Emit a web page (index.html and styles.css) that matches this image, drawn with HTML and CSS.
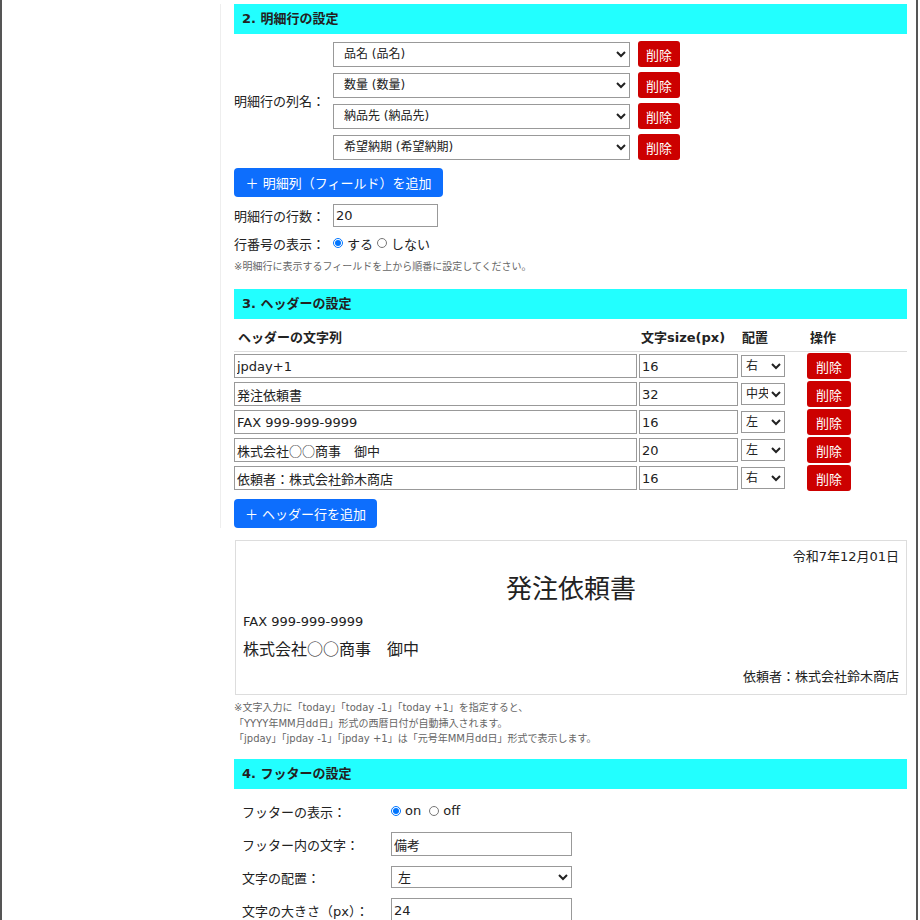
FILE: index.html
```html
<!DOCTYPE html>
<html lang="ja">
<head>
    <meta charset="UTF-8">
    <meta name="viewport" content="width=device-width, initial-scale=1.0">
    <title>帳票設定</title>
    <link rel="stylesheet" href="styles.css">
</head>
<body>
    <div class="frame">
        <div class="side"></div>

        <div class="main">
            <div class="panel">
                <!-- 2. 明細行 -->
                <h2 class="sec-title">2. 明細行の設定</h2>
                <div class="cols-block">
                    <div class="cols-label">明細行の列名：</div>
                    <div class="cols-list">
                        <div class="col-row">
                            <select class="col-select"><option>品名 (品名)</option></select>
                            <button class="btn-del">削除</button>
                        </div>
                        <div class="col-row">
                            <select class="col-select"><option>数量 (数量)</option></select>
                            <button class="btn-del">削除</button>
                        </div>
                        <div class="col-row">
                            <select class="col-select"><option>納品先 (納品先)</option></select>
                            <button class="btn-del">削除</button>
                        </div>
                        <div class="col-row">
                            <select class="col-select"><option>希望納期 (希望納期)</option></select>
                            <button class="btn-del">削除</button>
                        </div>
                    </div>
                </div>
                <button class="btn-add btn-add-col">＋ 明細列（フィールド）を追加</button>

                <div class="form-row row-count">
                    <label class="row-label" for="rowCount">明細行の行数：</label>
                    <input id="rowCount" class="num-input" type="text" value="20">
                </div>
                <div class="form-row row-numbers">
                    <span class="row-label">行番号の表示：</span>
                    <label class="radio"><input type="radio" name="lineNo" checked> する</label>
                    <label class="radio"><input type="radio" name="lineNo"> しない</label>
                </div>
                <p class="note">※明細行に表示するフィールドを上から順番に設定してください。</p>

                <!-- 3. ヘッダー -->
                <h2 class="sec-title">3. ヘッダーの設定</h2>
                <div class="hd-head">
                    <span class="hd-c1">ヘッダーの文字列</span>
                    <span class="hd-c2">文字size(px)</span>
                    <span class="hd-c3">配置</span>
                    <span class="hd-c4">操作</span>
                </div>
                <div class="hd-rows">
                    <div class="hd-row">
                        <input class="hd-text" type="text" value="jpday+1">
                        <input class="hd-size" type="text" value="16">
                        <select class="hd-align"><option>右</option></select>
                        <button class="btn-del">削除</button>
                    </div>
                    <div class="hd-row">
                        <input class="hd-text" type="text" value="発注依頼書">
                        <input class="hd-size" type="text" value="32">
                        <select class="hd-align"><option>中央</option></select>
                        <button class="btn-del">削除</button>
                    </div>
                    <div class="hd-row">
                        <input class="hd-text" type="text" value="FAX 999-999-9999">
                        <input class="hd-size" type="text" value="16">
                        <select class="hd-align"><option>左</option></select>
                        <button class="btn-del">削除</button>
                    </div>
                    <div class="hd-row">
                        <input class="hd-text hd-cjk" type="text" value="株式会社○○商事　御中">
                        <input class="hd-size" type="text" value="20">
                        <select class="hd-align"><option>左</option></select>
                        <button class="btn-del">削除</button>
                    </div>
                    <div class="hd-row">
                        <input class="hd-text" type="text" value="依頼者：株式会社鈴木商店">
                        <input class="hd-size" type="text" value="16">
                        <select class="hd-align"><option>右</option></select>
                        <button class="btn-del">削除</button>
                    </div>
                </div>
                <button class="btn-add btn-add-head">＋ ヘッダー行を追加</button>
            </div>

            <!-- プレビュー -->
            <div class="preview">
                <div class="pv-line pv-right pv-date">令和7年12月01日</div>
                <div class="pv-line pv-center pv-title">発注依頼書</div>
                <div class="pv-line pv-fax">FAX 999-999-9999</div>
                <div class="pv-line pv-to">株式会社<span class="cjk">○○</span>商事　御中</div>
                <div class="pv-line pv-right pv-from">依頼者：株式会社鈴木商店</div>
            </div>
            <p class="note note-date">
                ※文字入力に「today」「today -1」「today +1」を指定すると、<br>
                「YYYY年MM月dd日」形式の西暦日付が自動挿入されます。<br>
                「jpday」「jpday -1」「jpday +1」は「元号年MM月dd日」形式で表示します。
            </p>

            <!-- 4. フッター -->
            <h2 class="sec-title sec-footer">4. フッターの設定</h2>
            <div class="ft-form">
                <div class="ft-row">
                    <span class="ft-label">フッターの表示：</span>
                    <div class="ft-field">
                        <label class="radio"><input type="radio" name="footer" checked> on</label>
                        <label class="radio"><input type="radio" name="footer"> off</label>
                    </div>
                </div>
                <div class="ft-row">
                    <span class="ft-label">フッター内の文字：</span>
                    <input class="ft-input" type="text" value="備考">
                </div>
                <div class="ft-row">
                    <span class="ft-label">文字の配置：</span>
                    <select class="ft-input ft-select"><option>左</option></select>
                </div>
                <div class="ft-row">
                    <span class="ft-label">文字の大きさ（px）：</span>
                    <input class="ft-input" type="text" value="24">
                </div>
            </div>
        </div>
    </div>
</body>
</html>
```

FILE: styles.css
```css
* {
    box-sizing: border-box;
}

body {
    margin: 0;
    font-family: "DejaVu Sans", "Noto Sans CJK JP", sans-serif;
    font-size: 13px;
    color: #222;
    background-color: #fff;
}

input, select, button {
    font-family: inherit;
    color: #222;
}

/* ○ marks look right only in the CJK face */
.cjk,
.hd-cjk {
    font-family: "Noto Sans CJK JP", sans-serif;
}

.frame {
    display: flex;
    width: 918px;
    height: 920px;
    overflow: hidden;
    border-left: 2px solid #555;
    border-right: 2px solid #555;
}

.side {
    width: 218px;
    flex-shrink: 0;
}

.main {
    flex: 1;
    padding: 4px 9px 0 14px;
}

/* sections 2 and 3 sit in a card with a faint edge */
.panel {
    margin-left: -14px;
    padding-left: 13px;
    border-left: 1px solid #eee;
}

.sec-title {
    margin: 0;
    height: 30px;
    line-height: 30px;
    padding-left: 8px;
    font-size: 13px;
    font-weight: bold;
    background-color: #22ffff;
}

/* --- 明細行 --- */
.cols-block {
    display: flex;
    align-items: center;
    margin-top: 7px;
}

.cols-label {
    width: 99px;
}

.cols-list {
    display: flex;
    flex-direction: column;
    gap: 5px;
}

.col-row {
    display: flex;
    align-items: center;
}

.col-select {
    width: 297px;
    height: 25px;
    font-size: 12px;
    padding-left: 6px;
    border: 1px solid #999;
    border-radius: 0;
    background-color: #fff;
    margin-right: 8px;
}

.btn-del {
    width: 42px;
    height: 26px;
    padding: 0;
    border: none;
    border-radius: 3px;
    background-color: #cc0000;
    color: #fff;
    font-size: 13px;
}

.btn-add {
    display: block;
    height: 29px;
    padding: 0 10px;
    border: none;
    border-radius: 4px;
    background-color: #0d6efd;
    color: #fff;
    font-size: 13px;
    white-space: nowrap;
}

.btn-add-col {
    margin-top: 8px;
    width: 209px;
}

.form-row {
    display: flex;
    align-items: center;
}

.row-label {
    width: 99px;
}

.row-count {
    margin-top: 7px;
}

.num-input {
    width: 105px;
    height: 23px;
    border: 1px solid #999;
    font-size: 13px;
    padding: 0 2px;
}

.row-numbers {
    margin-top: 5px;
    height: 22px;
}

.radio {
    display: inline-flex;
    align-items: center;
    margin-right: 4px;
}

.radio input {
    width: 10px;
    height: 10px;
    margin: 0 4px 0 0;
}

.note {
    margin: 5px 0 0;
    font-size: 10px;
    color: #666;
    line-height: 16px;
}

.row-numbers + .note {
    margin-bottom: 14px;
}

/* --- ヘッダー --- */
.hd-head {
    display: flex;
    align-items: center;
    height: 33px;
    padding-top: 3px;
    border-bottom: 1px solid #ddd;
    font-weight: bold;
}

.hd-c1 {
    width: 407px;
    padding-left: 4px;
}

.hd-c2 {
    width: 101px;
}

.hd-c3 {
    width: 68px;
}

.hd-row {
    display: flex;
    align-items: center;
    height: 28px;
}

.hd-text,
.hd-size {
    height: 24px;
    border: 1px solid #999;
    font-size: 13px;
    padding: 0 2px;
}

.hd-text {
    width: 403px;
    margin-right: 2px;
}

.hd-size {
    width: 99px;
    margin-right: 3px;
}

.hd-align {
    width: 44px;
    height: 22px;
    font-size: 12px;
    padding: 0;
    border: 1px solid #999;
    border-radius: 0;
    background-color: #fff;
    margin-right: 22px;
}

.hd-row .btn-del {
    width: 44px;
}

.btn-add-head {
    margin-top: 7px;
    width: 143px;
}

/* --- プレビュー --- */
.preview {
    margin: 12px 0 0 1px;
    height: 155px;
    border: 1px solid #ddd;
    padding: 6px 7px 0 7px;
}

.pv-right {
    text-align: right;
}

.pv-center {
    text-align: center;
}

.pv-date {
    font-size: 13px;
    line-height: 20px;
}

.pv-title {
    font-size: 26px;
    line-height: 44px;
}

.pv-fax {
    font-size: 13px;
    line-height: 22px;
}

.pv-to {
    font-size: 16px;
    line-height: 30px;
}

.pv-from {
    font-size: 13px;
    line-height: 24px;
}

.note-date {
    margin: 5px 0 0;
    line-height: 15.5px;
}

/* --- フッター --- */
.sec-footer {
    margin-top: 12px;
}

.ft-form {
    padding: 6px 0 0 8px;
}

.ft-row {
    display: flex;
    align-items: center;
    height: 33px;
}

.ft-label {
    width: 149px;
}

.ft-input {
    width: 181px;
    height: 24px;
    border: 1px solid #999;
    font-size: 13px;
    padding: 0 2px;
}

.ft-select {
    height: 22px;
    border-radius: 0;
    background-color: #fff;
}
```
